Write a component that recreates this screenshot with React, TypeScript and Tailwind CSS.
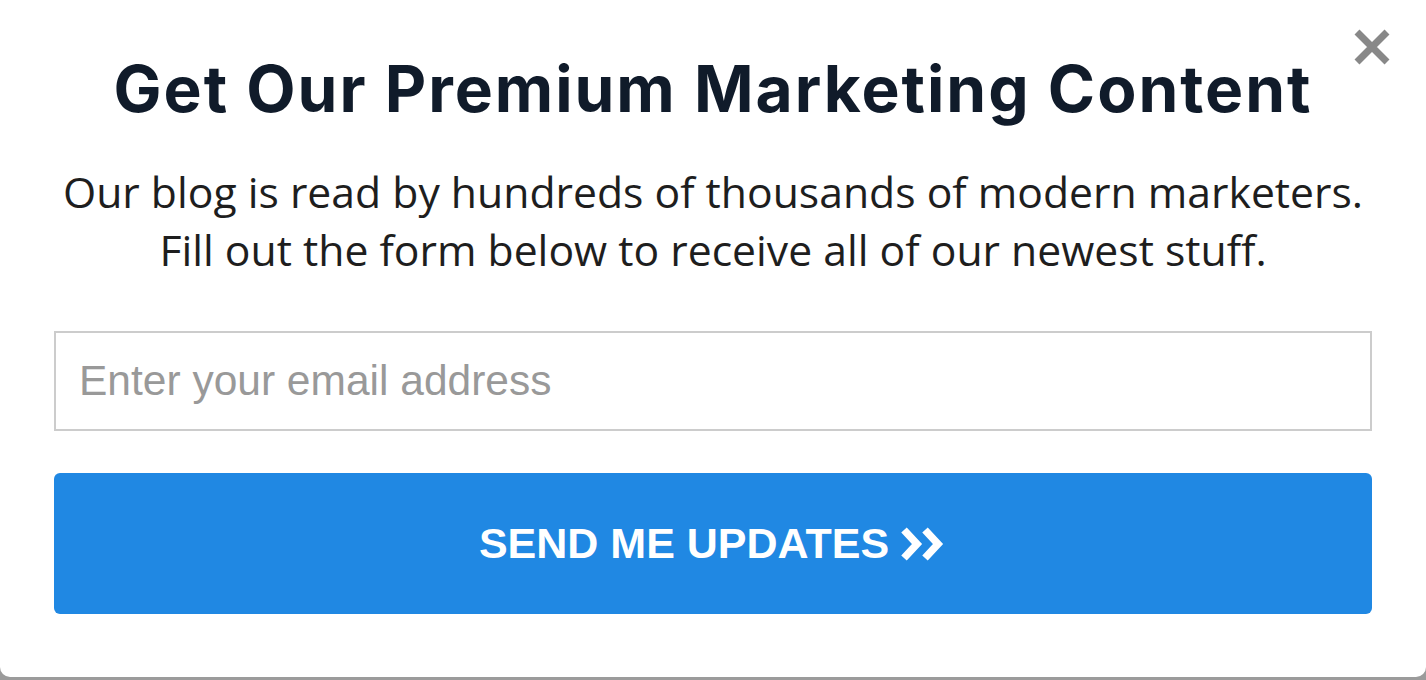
export default function App() {
  return (
    <div className="w-[1426px] h-[680px] overflow-hidden bg-[#9b9b9b] flex flex-col">
      {/* popup card */}
      <div className="relative h-[677px] shrink-0 bg-white rounded-b-[10px] flex flex-col items-center px-[54px] pt-[53px]">
        <button className="absolute right-[34px] top-[27px] w-[40px] h-[40px] flex items-center justify-center" aria-label="Close">
          <svg width="38" height="38" viewBox="0 0 38 38">
            <path d="M4 4 L34 34 M34 4 L4 34" stroke="#888888" strokeWidth="7" />
          </svg>
        </button>

        <h1 className="font-['Inter',sans-serif] font-bold text-[64px] leading-[72px] text-[#101b2a] tracking-[2px] whitespace-nowrap">
          Get Our Premium Marketing Content
        </h1>

        <p className="mt-[38px] font-['Open_Sans',sans-serif] text-[42.7px] leading-[58px] text-[#1e1e1e] text-center whitespace-nowrap">
          Our blog is read by hundreds of thousands of modern marketers.
          <br />
          Fill out the form below to receive all of our newest stuff.
        </p>

        <input
          type="email"
          placeholder="Enter your email address"
          className="mt-[52px] w-full h-[100px] shrink-0 border-2 border-[#cccccc] pl-[23px] pr-[24px] font-['Liberation_Sans',Arial,sans-serif] text-[42.5px] text-[#333] placeholder:text-[#999999] outline-none"
        />

        <button className="mt-[42px] w-full h-[141px] shrink-0 rounded-[6px] bg-[#2088e3] flex items-center justify-center gap-[12px] font-['Liberation_Sans',Arial,sans-serif] font-bold text-[43px] text-white">
          SEND ME UPDATES
          <svg width="46" height="34" viewBox="0 0 46 34">
            <path d="M3 3 L16 17 L3 31 M24 3 L37 17 L24 31" stroke="white" strokeWidth="7.5" fill="none" />
          </svg>
        </button>
      </div>

      {/* page content behind the overlay */}
      <div className="h-[3px] overflow-visible pl-[346px] font-['Liberation_Sans',Arial,sans-serif] text-[34px] leading-[40px] text-[#111] whitespace-nowrap">
        Finding the right tools to build your business online
      </div>
    </div>
  );
}
